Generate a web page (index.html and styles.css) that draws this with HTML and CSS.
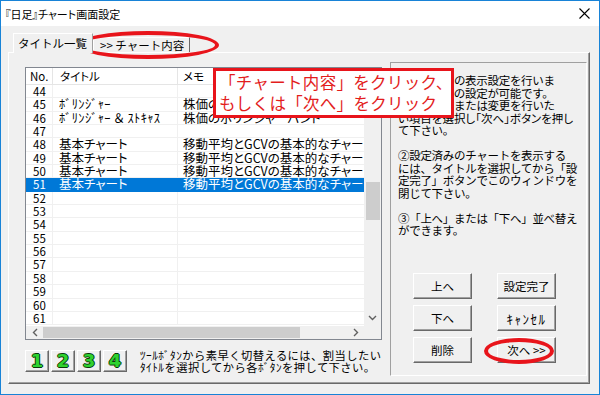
FILE: index.html
```html
<!DOCTYPE html>
<html lang="ja">
<head>
    <meta charset="UTF-8">
    <link rel="stylesheet" href="styles.css">
    <title>『日足』チャート画面設定</title>
</head>
<body>
<div class="window">
    <div class="titlebar">
        <span class="title">『日足』チャート画面設定</span>
        <span class="close">
            <svg width="11" height="11" viewBox="0 0 11 11"><path d="M0.5 0.5L10.5 10.5M10.5 0.5L0.5 10.5" stroke="#000" stroke-width="1.1" fill="none"/></svg>
        </span>
    </div>
    <div class="client">
        <div class="tabs">
            <div class="tab tab-active">タイトル一覧</div>
            <div class="tab">&gt;&gt; チャート内容</div>
        </div>
        <div class="panel">
            <div class="left">
                <div class="list">
                    <div class="list-main">
                        <div class="lv-head">
                            <div class="c-no">No.</div>
                            <div class="c-title">タイトル</div>
                            <div class="c-memo">メモ</div>
                        </div>
                        <div class="lv-body">
                            <div class="row"><div class="c-no">44</div><div class="c-title"></div><div class="c-memo"></div></div>
                            <div class="row"><div class="c-no">45</div><div class="c-title hw">ﾎﾞﾘﾝｼﾞｬｰ</div><div class="c-memo">株価のボリンジャーバンド</div></div>
                            <div class="row"><div class="c-no">46</div><div class="c-title hw">ﾎﾞﾘﾝｼﾞｬｰ ＆ ｽﾄｷｬｽ</div><div class="c-memo">株価のボリンジャーバンド</div></div>
                            <div class="row"><div class="c-no">47</div><div class="c-title"></div><div class="c-memo"></div></div>
                            <div class="row"><div class="c-no">48</div><div class="c-title">基本チャート</div><div class="c-memo">移動平均とGCVの基本的なチャート</div></div>
                            <div class="row"><div class="c-no">49</div><div class="c-title">基本チャート</div><div class="c-memo">移動平均とGCVの基本的なチャート</div></div>
                            <div class="row"><div class="c-no">50</div><div class="c-title">基本チャート</div><div class="c-memo">移動平均とGCVの基本的なチャート</div></div>
                            <div class="row selected"><div class="c-no">51</div><div class="c-title">基本チャート</div><div class="c-memo">移動平均とGCVの基本的なチャート</div></div>
                            <div class="row"><div class="c-no">52</div><div class="c-title"></div><div class="c-memo"></div></div>
                            <div class="row"><div class="c-no">53</div><div class="c-title"></div><div class="c-memo"></div></div>
                            <div class="row"><div class="c-no">54</div><div class="c-title"></div><div class="c-memo"></div></div>
                            <div class="row"><div class="c-no">55</div><div class="c-title"></div><div class="c-memo"></div></div>
                            <div class="row"><div class="c-no">56</div><div class="c-title"></div><div class="c-memo"></div></div>
                            <div class="row"><div class="c-no">57</div><div class="c-title"></div><div class="c-memo"></div></div>
                            <div class="row"><div class="c-no">58</div><div class="c-title"></div><div class="c-memo"></div></div>
                            <div class="row"><div class="c-no">59</div><div class="c-title"></div><div class="c-memo"></div></div>
                            <div class="row"><div class="c-no">60</div><div class="c-title"></div><div class="c-memo"></div></div>
                            <div class="row"><div class="c-no">61</div><div class="c-title"></div><div class="c-memo"></div></div>
                        </div>
                    </div>
                    <div class="vscroll">
                        <div class="arrow"><svg width="9" height="6" viewBox="0 0 9 6"><path d="M1 5L4.5 1.5L8 5" stroke="#606060" stroke-width="1.4" fill="none"/></svg></div>
                        <div class="vthumb"></div>
                        <div class="arrow arrow-end"><svg width="9" height="6" viewBox="0 0 9 6"><path d="M1 1L4.5 4.5L8 1" stroke="#606060" stroke-width="1.4" fill="none"/></svg></div>
                    </div>
                    <div class="hscroll">
                        <div class="arrow"><svg width="6" height="9" viewBox="0 0 6 9"><path d="M5 1L1.5 4.5L5 8" stroke="#606060" stroke-width="1.4" fill="none"/></svg></div>
                        <div class="hthumb"></div>
                        <div class="arrow arrow-end"><svg width="6" height="9" viewBox="0 0 6 9"><path d="M1 1L4.5 4.5L1 8" stroke="#606060" stroke-width="1.4" fill="none"/></svg></div>
                    </div>
                    <div class="corner"></div>
                </div>
                <div class="toolrow">
                    <div class="numbtns">
                        <div class="numbtn">1</div>
                        <div class="numbtn">2</div>
                        <div class="numbtn">3</div>
                        <div class="numbtn">4</div>
                    </div>
                    <div class="tooltext">
                        <div>ﾂｰﾙﾎﾞﾀﾝから素早く切替えるには、割当したい</div>
                        <div>ﾀｲﾄﾙを選択してから各ﾎﾞﾀﾝを押して下さい。</div>
                    </div>
                </div>
            </div>
            <div class="info">
                <div class="info-text">
                    <div>①チャートの表示設定を行いま</div>
                    <div>す。60通りの設定が可能です。</div>
                    <div>新規作成、または変更を行いた</div>
                    <div class="tight">い項目を選択し「次へ」ボタンを押し</div>
                    <div>て下さい。</div>
                    <div class="gap"></div>
                    <div>②設定済みのチャートを表示する</div>
                    <div>には、タイトルを選択してから「設</div>
                    <div>定完了」ボタンでこのウィンドウを</div>
                    <div>閉じて下さい。</div>
                    <div class="gap"></div>
                    <div>③「上へ」または「下へ」並べ替え</div>
                    <div>ができます。</div>
                </div>
                <div class="btn-grid">
                    <div class="btn">上へ</div>
                    <div class="btn">設定完了</div>
                    <div class="btn">下へ</div>
                    <div class="btn btn-hw">ｷｬﾝｾﾙ</div>
                    <div class="btn">削除</div>
                    <div class="btn">次へ &gt;&gt;</div>
                </div>
            </div>
        </div>
    </div>

    <div class="callout">
        <div>「チャート内容」をクリック、</div>
        <div>もしくは「次へ」をクリック</div>
    </div>
    <div class="ring ring-tab"></div>
    <div class="ring ring-next"></div>
</div>
</body>
</html>
```

FILE: styles.css
```css
*{
  box-sizing: border-box;
}
body{
  margin: 0;
  font-family: "Noto Sans CJK JP", "Noto Sans", sans-serif;
  color: #000;
}
.window{
  position: relative;
  width: 600px;
  height: 395px;
  border: 1px solid #1883d7;
  background: #f0f0f0;
  display: flex;
  flex-direction: column;
}

/* title bar */
.titlebar{
  height: 25px;
  background: #fff;
  display: flex;
  align-items: center;
  justify-content: space-between;
  padding-left: 4px;
  padding-right: 9px;
}
.title{
  font-size: 11px;
  font-feature-settings: "palt";
}
.close{
  display: flex;
}

/* client area */
.client{
  padding: 7px 0 0 7px;
}
.tabs{
  display: flex;
  align-items: flex-end;
  height: 19px;
  padding-left: 5px;
  font-size: 11.5px;
}
.tab{
  height: 15px;
  line-height: 14px;
  padding: 0 5px 0 6px;
  border-top: 1px solid #fff;
  border-left: 1px solid #fff;
  border-right: 1px solid #696969;
  white-space: nowrap;
}
.tab-active{
  position: relative;
  z-index: 1;
  height: 20px;
  line-height: 18px;
  margin-bottom: -1px;
  padding: 0 4px;
  width: 80px;
  background: #f0f0f0;
  border-right: 1px solid #a0a0a0;
}
.panel{
  width: 582px;
  height: 332px;
  border-top: 1px solid #fff;
  border-left: 1px solid #fff;
  border-right: 1px solid #696969;
  border-bottom: 1px solid #696969;
  box-shadow: inset -1px -1px 0 #a0a0a0;
  padding: 9px 2px 0 16px;
  display: flex;
  gap: 8px;
}

/* list view */
.left{
  width: 357px;
  margin-top: 5px;
}
.list{
  width: 357px;
  height: 273px;
  border: 1px solid #828790;
  background: #fff;
  display: grid;
  grid-template-columns: 1fr 17px;
  grid-template-rows: 1fr 13px;
  font-feature-settings: "palt";
}
.list-main{
  overflow: hidden;
}
.lv-head{
  display: flex;
  height: 17px;
  line-height: 16px;
  font-size: 11.5px;
  border-bottom: 1px solid #e5e5e5;
}
.lv-head > div{
  border-right: 1px solid #e5e5e5;
}
.lv-head .c-no{
  padding-left: 4px;
}
.lv-head .c-title{
  padding-left: 7px;
}
.lv-head .c-memo{
  padding-left: 5px;
}
.c-no{
  width: 27px;
  flex: none;
}
.c-title{
  width: 125px;
  flex: none;
}
.c-memo{
  flex: 1;
  min-width: 0;
  overflow: hidden;
}
.row{
  display: flex;
  height: 13.35px;
  line-height: 12.5px;
  font-size: 12.5px;
  border-bottom: 1px solid #f0f0f0;
  white-space: nowrap;
}
.row > div{
  border-right: 1px solid #f0f0f0;
}
.row .c-no{
  padding-left: 7px;
  font-size: 11.5px;
}
.row .c-title{
  padding-left: 6px;
}
.row .hw{
  letter-spacing: 0.3px;
}
.row .c-memo{
  padding-left: 5px;
  border-right: none;
}
.row.selected{
  background: #0078d7;
  color: #fff;
  border-bottom-color: #0078d7;
}
.row.selected > div{
  border-right-color: #0078d7;
}

/* scroll bars */
.vscroll{
  background: #f0f0f0;
  display: flex;
  flex-direction: column;
  align-items: center;
}
.vscroll .arrow{
  height: 17px;
  display: flex;
  align-items: center;
  justify-content: center;
}
.vthumb{
  width: 14px;
  height: 38px;
  margin-top: 97px;
  background: #cdcdcd;
}
.arrow-end{
  margin-top: auto;
}
.hscroll{
  background: #f0f0f0;
  display: flex;
  align-items: center;
}
.hscroll .arrow{
  width: 17px;
  height: 13px;
  display: flex;
  align-items: center;
  justify-content: center;
}
.hthumb{
  width: 257px;
  height: 11px;
  background: #cdcdcd;
}
.hscroll .arrow-end{
  margin-left: auto;
  margin-top: 0;
}
.corner{
  background: #f0f0f0;
}

/* tool buttons */
.toolrow{
  display: flex;
  align-items: center;
  margin-top: 9px;
  gap: 13px;
}
.numbtns{
  display: flex;
  gap: 2px;
}
.numbtn{
  width: 24px;
  height: 22px;
  border-top: 1px solid #fff;
  border-left: 1px solid #fff;
  border-right: 1px solid #696969;
  border-bottom: 1px solid #696969;
  box-shadow: inset -1px -1px 0 #a0a0a0;
  display: flex;
  align-items: center;
  justify-content: center;
  font-family: "DejaVu Sans", sans-serif;
  font-weight: bold;
  font-size: 18px;
  line-height: 1;
  color: #2fd32f;
  text-shadow: 1px 0 0 #0a3a0a, -1px 0 0 #0a3a0a, 0 1px 0 #0a3a0a, 0 -1px 0 #0a3a0a;
}
.tooltext{
  font-size: 11.3px;
  line-height: 12px;
  letter-spacing: 0.45px;
  white-space: nowrap;
}

/* info box */
.info{
  width: 197px;
  height: 314px;
  border-top: 1px solid #a0a0a0;
  border-left: 1px solid #a0a0a0;
  border-right: 1px solid #fff;
  border-bottom: 1px solid #fff;
  display: flex;
  flex-direction: column;
}
.info-text{
  padding: 11px 0 0 7px;
  font-size: 11.5px;
  line-height: 12.5px;
  letter-spacing: -0.3px;
  white-space: nowrap;
}
.info-text .tight{
  font-feature-settings: "palt";
  letter-spacing: 0;
}
.gap{
  height: 12.5px;
}
.btn-grid{
  margin-top: auto;
  padding: 0 0 12px 22px;
  display: grid;
  grid-template-columns: 59px 59px;
  grid-auto-rows: 26px;
  column-gap: 25px;
  row-gap: 6px;
}
.btn{
  border-top: 1px solid #fff;
  border-left: 1px solid #fff;
  border-right: 1px solid #696969;
  border-bottom: 1px solid #696969;
  box-shadow: inset -1px -1px 0 #a0a0a0;
  display: flex;
  align-items: center;
  justify-content: center;
  font-size: 11.5px;
  white-space: nowrap;
}
.btn-hw{
  font-size: 13px;
  letter-spacing: 1.5px;
}

/* annotations drawn over the dialog */
.callout{
  position: absolute;
  left: 212px;
  top: 67px;
  width: 241px;
  height: 50px;
  border: 3px solid #e8141b;
  background: #fff;
  color: #e31d1d;
  font-size: 16.5px;
  line-height: 21px;
  letter-spacing: 0.3px;
  padding: 1px 0 0 3px;
  white-space: nowrap;
}
.ring{
  position: absolute;
  border: 4px solid #e8141b;
  border-radius: 50%;
}
.ring-tab{
  left: 76px;
  top: 30px;
  width: 142px;
  height: 28px;
}
.ring-next{
  left: 483px;
  top: 337px;
  width: 70px;
  height: 26px;
}
```
